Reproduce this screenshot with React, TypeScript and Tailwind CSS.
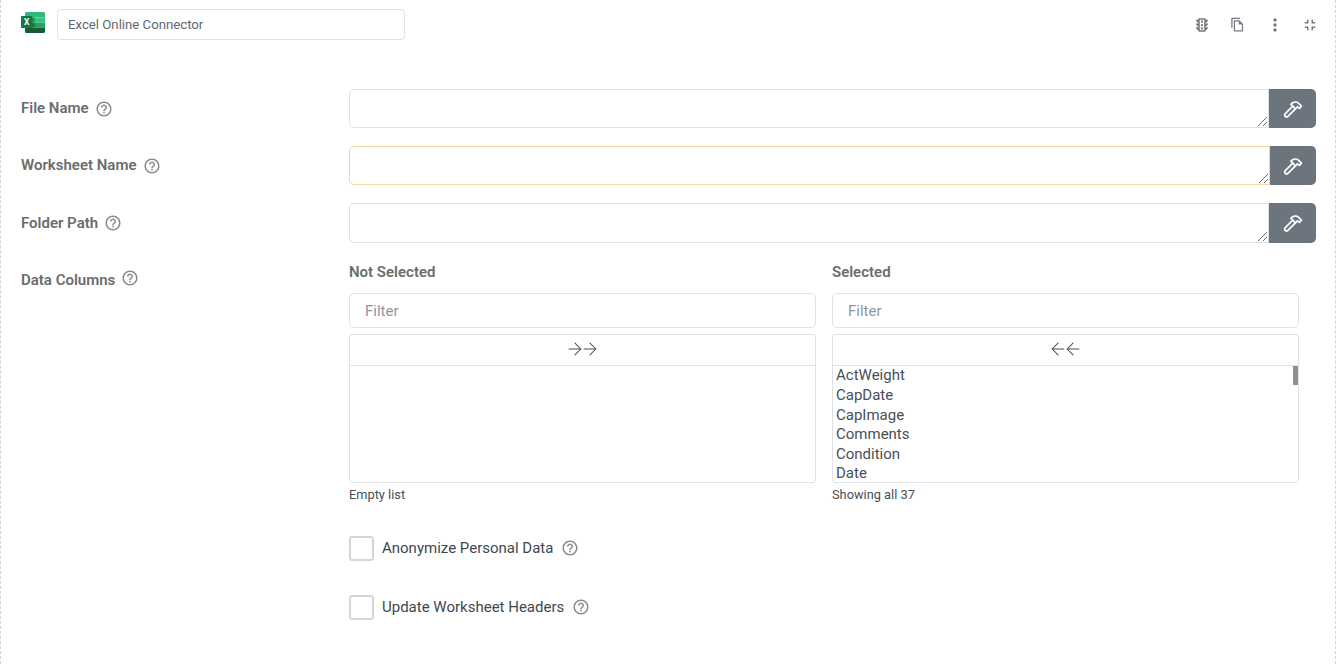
import React from 'react';
import { MdHelpOutline, MdMoreVert, MdFullscreenExit, MdOutlineFileCopy, MdOutlineTraffic } from 'react-icons/md';
import { ArrowLeft, ArrowRight } from 'lucide-react';

const ExcelLogo = () => (
  <svg width="24" height="21" viewBox="0 0 24 21" className="block">
    <path d="M5.500 0h17A1.500 1.500 0 0 1 24 1.500V5.500H4V1.500A1.500 1.500 0 0 1 5.500 0z" fill="#2fb877" />
    <rect x="4" y="5.500" width="10" height="5" fill="#1f9d5f" />
    <rect x="14" y="5.500" width="10" height="5" fill="#33c481" />
    <rect x="4" y="10.500" width="10" height="5" fill="#107c41" />
    <rect x="14" y="10.500" width="10" height="5" fill="#21a366" />
    <path d="M4 15.500h20v4A1.500 1.500 0 0 1 22.500 21h-17A1.500 1.500 0 0 1 4 19.500z" fill="#185c37" />
    <rect x="0" y="4" width="11.500" height="12" rx="1" fill="#10793f" />
    <text x="5.750" y="13" textAnchor="middle" fontSize="8.500" fontWeight="700" fill="#fff" fontFamily="Roboto, sans-serif">X</text>
  </svg>
);

const HammerIcon = () => (
  <svg width="20" height="20" viewBox="0 0 20 20" fill="none" stroke="#fff" strokeWidth="1.700" strokeLinejoin="round" strokeLinecap="round">
    <path d="M2.300 14.700 9.800 7.200l2.600 2.600-7.500 7.500a1.800 1.800 0 0 1-2.600-2.600z" />
    <path d="M9.800 7.200 7.800 5.200C10 2.700 13.300 2.300 15.400 4.200l3 3-2 2.200-2-1.500-1.900 1.900" />
  </svg>
);

const Help = ({ size = 18 }: { size?: number }) => <MdHelpOutline size={size} className="shrink-0 text-[#8a8a8a]" />;

const FieldLabel = ({ text, className = '' }: { text: string; className?: string }) => (
  <div className={`w-[348px] shrink-0 pl-[20px] flex items-center gap-[6px] text-[15px] font-semibold text-[#6c6c6c] ${className}`}>
    <span>{text}</span>
    <Help size={18} />
  </div>
);

const ResizeGrip = () => (
  <svg width="9" height="9" viewBox="0 0 9 9" className="absolute right-[1px] bottom-[1px]" stroke="#6b6b6b" strokeWidth="1">
    <path d="M0 9 9 0M5 9l4-4" />
  </svg>
);

const TextRow = ({ label, focused, height, mb }: { label: string; focused?: boolean; height: string; mb: string }) => (
  <div className={`flex items-center ${height} ${mb}`}>
    <FieldLabel text={label} />
    <div className="flex h-full w-[967px]">
      <div className={focused
        ? 'relative flex-1 bg-white border border-[#fdd5a5] rounded-l-[5px]'
        : 'relative flex-1 bg-white border border-[#dee2e6] rounded-l-[5px]'}>
        <ResizeGrip />
      </div>
      <button className={focused
        ? 'w-[46px] bg-[#6c757d] rounded-r-[5px] flex items-center justify-center'
        : 'w-[47px] bg-[#6c757d] rounded-r-[5px] flex items-center justify-center'}>
        <HammerIcon />
      </button>
    </div>
  </div>
);

const columns = ['ActWeight', 'CapDate', 'CapImage', 'Comments', 'Condition', 'Date'];

const DualColumn = ({ title, footer, items, dir }: { title: string; footer: string; items: string[]; dir: 'right' | 'left' }) => (
  <div className="w-[467px] shrink-0">
    <div className="h-[19px] leading-[19px] text-[15px] font-semibold text-[#6c6c6c]">{title}</div>
    <div className="mt-[11px] h-[35px] border border-[#dee2e6] rounded-[5px] px-[15px] pt-[1px] flex items-center text-[15px] text-[#8f979e]">Filter</div>
    <div className="mt-[6px] h-[149px] border border-[#dee2e6] rounded-[3px] flex flex-col">
      <div className="h-[31px] shrink-0 border-b border-[#dee2e6] pb-[2px] flex items-center justify-center text-[#444b52]">
        {dir === 'right' ? (
          <>
            <ArrowRight size={20} strokeWidth={1.25} className="-mr-[5px]" />
            <ArrowRight size={20} strokeWidth={1.25} />
          </>
        ) : (
          <>
            <ArrowLeft size={20} strokeWidth={1.25} className="-mr-[5px]" />
            <ArrowLeft size={20} strokeWidth={1.25} />
          </>
        )}
      </div>
      <div className="relative flex-1 overflow-hidden pl-[3px] pt-[0.4px] text-[15px] leading-[19.6px] text-[#495057]">
        {items.map((item) => (
          <div key={item}>{item}</div>
        ))}
        {items.length > 0 && <div className="absolute right-0 top-0 w-[5px] h-[19px] bg-[#8d9196]" />}
      </div>
    </div>
    <div className="mt-[4px] text-[12.800px] leading-[16px] text-[#495057]">{footer}</div>
  </div>
);

const CheckRow = ({ label, mb }: { label: string; mb: string }) => (
  <div className={`flex items-center h-[26px] ${mb}`}>
    <div className="w-[25px] h-[25px] border-2 border-[#d6d6d2] rounded-[3px] bg-white shrink-0" />
    <span className="ml-[8px] text-[15px] text-[#3f4750]">{label}</span>
    <span className="ml-[8px]"><Help size={18} /></span>
  </div>
);

export default function App() {
  return (
    <div className="w-[1336px] h-[664px] overflow-hidden bg-white border-x border-dashed border-[#d4d4d4] font-['Roboto',sans-serif] flex flex-col">
      <div className="flex items-center h-[31px] mt-[9px]">
        <div className="ml-[20px] w-[24px] -mt-[4px]"><ExcelLogo /></div>
        <div className="ml-[12px] w-[348px] h-[31px] border border-[#dee2e6] rounded-[4px] px-[10px] flex items-center text-[13.200px] text-[#5f6770]">
          Excel Online Connector
        </div>
        <div className="ml-auto flex items-center text-[#757b80]">
          <MdOutlineTraffic size={18} />
          <MdOutlineFileCopy size={15} className="ml-[19px]" />
          <MdMoreVert size={20} className="ml-[20px]" />
          <MdFullscreenExit size={18} className="ml-[16px] mr-[16px]" />
        </div>
      </div>

      <div className="mt-[49px]">
        <TextRow label="File Name" height="h-[39px]" mb="mb-[18px]" />
        <TextRow label="Worksheet Name" focused height="h-[39px]" mb="mb-[18px]" />
        <TextRow label="Folder Path" height="h-[40px]" mb="mb-[20px]" />
      </div>

      <div className="flex">
        <FieldLabel text="Data Columns" className="h-[34px] items-start pt-[6px]" />
        <div className="flex gap-[16px]">
          <DualColumn title="Not Selected" footer="Empty list" items={[]} dir="right" />
          <DualColumn title="Selected" footer="Showing all 37" items={columns} dir="left" />
        </div>
      </div>

      <div className="ml-[348px] mt-[32px]">
        <CheckRow label="Anonymize Personal Data" mb="mb-[33px]" />
        <CheckRow label="Update Worksheet Headers" mb="" />
      </div>
    </div>
  );
}
